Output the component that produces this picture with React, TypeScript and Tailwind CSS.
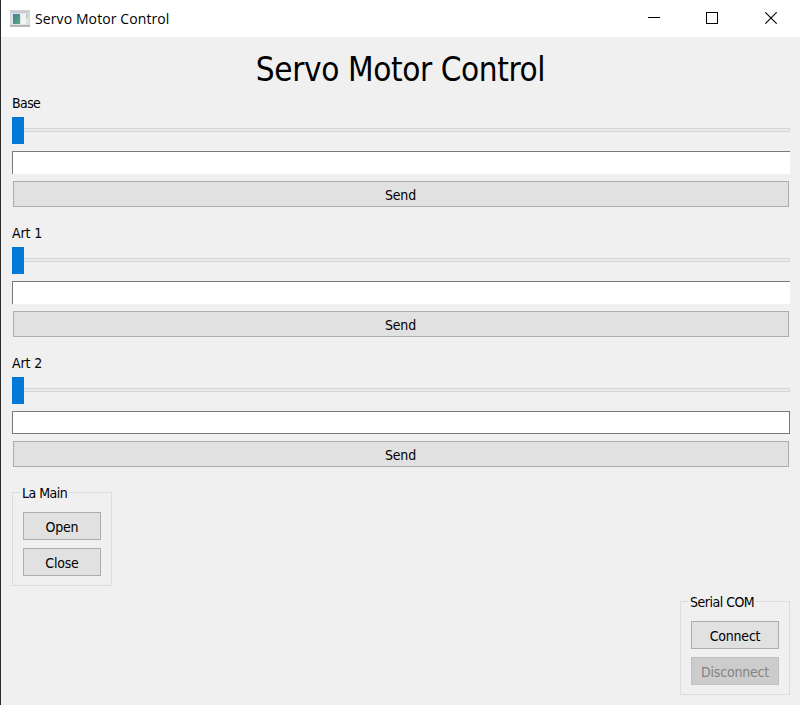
import type { ReactNode } from "react";

const tahoma = "font-['DejaVu_Sans_Condensed','DejaVu_Sans',sans-serif]";

function AppIcon() {
  return (
    <svg width="20" height="18" viewBox="0 0 20 18" className="shrink-0" shapeRendering="crispEdges">
      <defs>
        <linearGradient id="pane" x1="0" y1="0" x2="1" y2="1">
          <stop offset="0" stopColor="#4678a0" />
          <stop offset="1" stopColor="#58b078" />
        </linearGradient>
        <linearGradient id="side" x1="0" y1="0" x2="0" y2="1">
          <stop offset="0" stopColor="#a5c2d8" />
          <stop offset="0.5" stopColor="#b5dcbb" />
          <stop offset="1" stopColor="#f0f0f0" />
        </linearGradient>
      </defs>
      <rect x="0" y="0" width="20" height="17" fill="#d2d4d6" />
      <rect x="0" y="15" width="20" height="2" fill="#b4b6b8" />
      <rect x="1" y="1" width="18" height="2" fill="#c8ccd0" />
      <rect x="1" y="3" width="18" height="12" fill="#e0e2e4" />
      <rect x="3" y="4" width="7" height="10" fill="url(#pane)" />
      <rect x="11" y="4" width="5" height="10" fill="#f4f4f4" />
      <rect x="16" y="4" width="2" height="7" fill="url(#side)" />
    </svg>
  );
}

function TitleBar() {
  return (
    <header className="flex h-[37px] items-center bg-white pl-[9px]">
      <AppIcon />
      <span className="ml-[5px] flex-1 whitespace-nowrap font-['Open_Sans','Noto_Sans',sans-serif] text-[14px] leading-5 tracking-[0.1px]">
        Servo Motor Control
      </span>
      <div className="flex w-[175px] pb-px pl-[23px]">
        <svg width="12" height="12" viewBox="0 0 12 12" shapeRendering="crispEdges">
          <rect y="5" width="12" height="1" />
        </svg>
        <svg
          className="ml-[46px]"
          width="12"
          height="12"
          viewBox="0 0 12 12"
          fill="none"
          stroke="#000"
          shapeRendering="crispEdges"
        >
          <rect x="0.5" y="0.5" width="11" height="11" />
        </svg>
        <svg className="ml-[47px]" width="12" height="12" viewBox="0 0 12 12" stroke="#000" strokeWidth="1.1">
          <path d="M0.3 0.3 11.7 11.7M11.7 0.3 0.3 11.7" />
        </svg>
      </div>
    </header>
  );
}

function Servo({ label, tracking, framed = false }: { label: string; tracking: string; framed?: boolean }) {
  return (
    <section className="flex h-[130px] flex-col">
      <label className={`h-5 text-[14px] leading-5 ${tracking}`}>{label}</label>
      <div className="mt-1 flex h-[27px] items-start">
        <div className="h-[27px] w-3 bg-[#0078d7]" />
        <div className="mt-[11px] h-1 flex-1 border border-l-0 border-[#d6d6d6] bg-[#e7eaea]" />
      </div>
      <div
        className={
          framed
            ? "mt-[7px] h-[23px] border border-[#7a7a7a] bg-white"
            : "mt-[7px] h-[23px] border-t border-l border-[#7a7a7a] bg-white"
        }
      />
      <button className="mx-px mt-[7px] h-[26px] border border-[#adadad] bg-[#e1e1e1] pt-px pr-px text-[14px] leading-5 tracking-[-0.15px]">
        Send
      </button>
    </section>
  );
}

function Group({ title, className, children }: { title: string; className: string; children: ReactNode }) {
  return (
    <section className={`relative flex h-[94px] flex-col gap-2 border border-[#dcdcdc] px-[10px] pt-[19px] ${className}`}>
      <h2 className="absolute -top-[10px] left-[7px] bg-[#f0f0f0] px-[2px] text-[14px] leading-5 tracking-[-0.5px] whitespace-nowrap">
        {title}
      </h2>
      {children}
    </section>
  );
}

function PushButton({ children, disabled = false }: { children: ReactNode; disabled?: boolean }) {
  return (
    <button
      disabled={disabled}
      className={`h-7 border pt-[2px] text-[14px] leading-5 tracking-[-0.2px] whitespace-nowrap ${
        disabled ? "border-[#bfbfbf] bg-[#cccccc] text-[#838383]" : "border-[#adadad] bg-[#e1e1e1] text-black"
      }`}
    >
      {children}
    </button>
  );
}

export default function App() {
  return (
    <div className={`h-[705px] w-[800px] overflow-hidden border-l border-[#2b2b2e] bg-[#f0f0f0] text-black ${tahoma}`}>
      <TitleBar />
      <main className="flex h-[668px] flex-col pr-[10px] pl-[11px]">
        <h1 className="mt-[11px] h-[45px] pr-px text-center text-[33px] leading-[44px] tracking-[-0.4px] whitespace-nowrap">
          Servo Motor Control
        </h1>
        <Servo label="Base" tracking="tracking-[-0.6px]" />
        <Servo label="Art 1" tracking="tracking-[-0.1px]" />
        <Servo label="Art 2" tracking="tracking-[-0.1px]" framed />
        <Group title="La Main" className="mt-[9px] w-[100px]">
          <PushButton>Open</PushButton>
          <PushButton>Close</PushButton>
        </Group>
        <Group title="Serial COM" className="mt-[15px] w-[110px] self-end">
          <PushButton>Connect</PushButton>
          <PushButton disabled>Disconnect</PushButton>
        </Group>
      </main>
    </div>
  );
}
